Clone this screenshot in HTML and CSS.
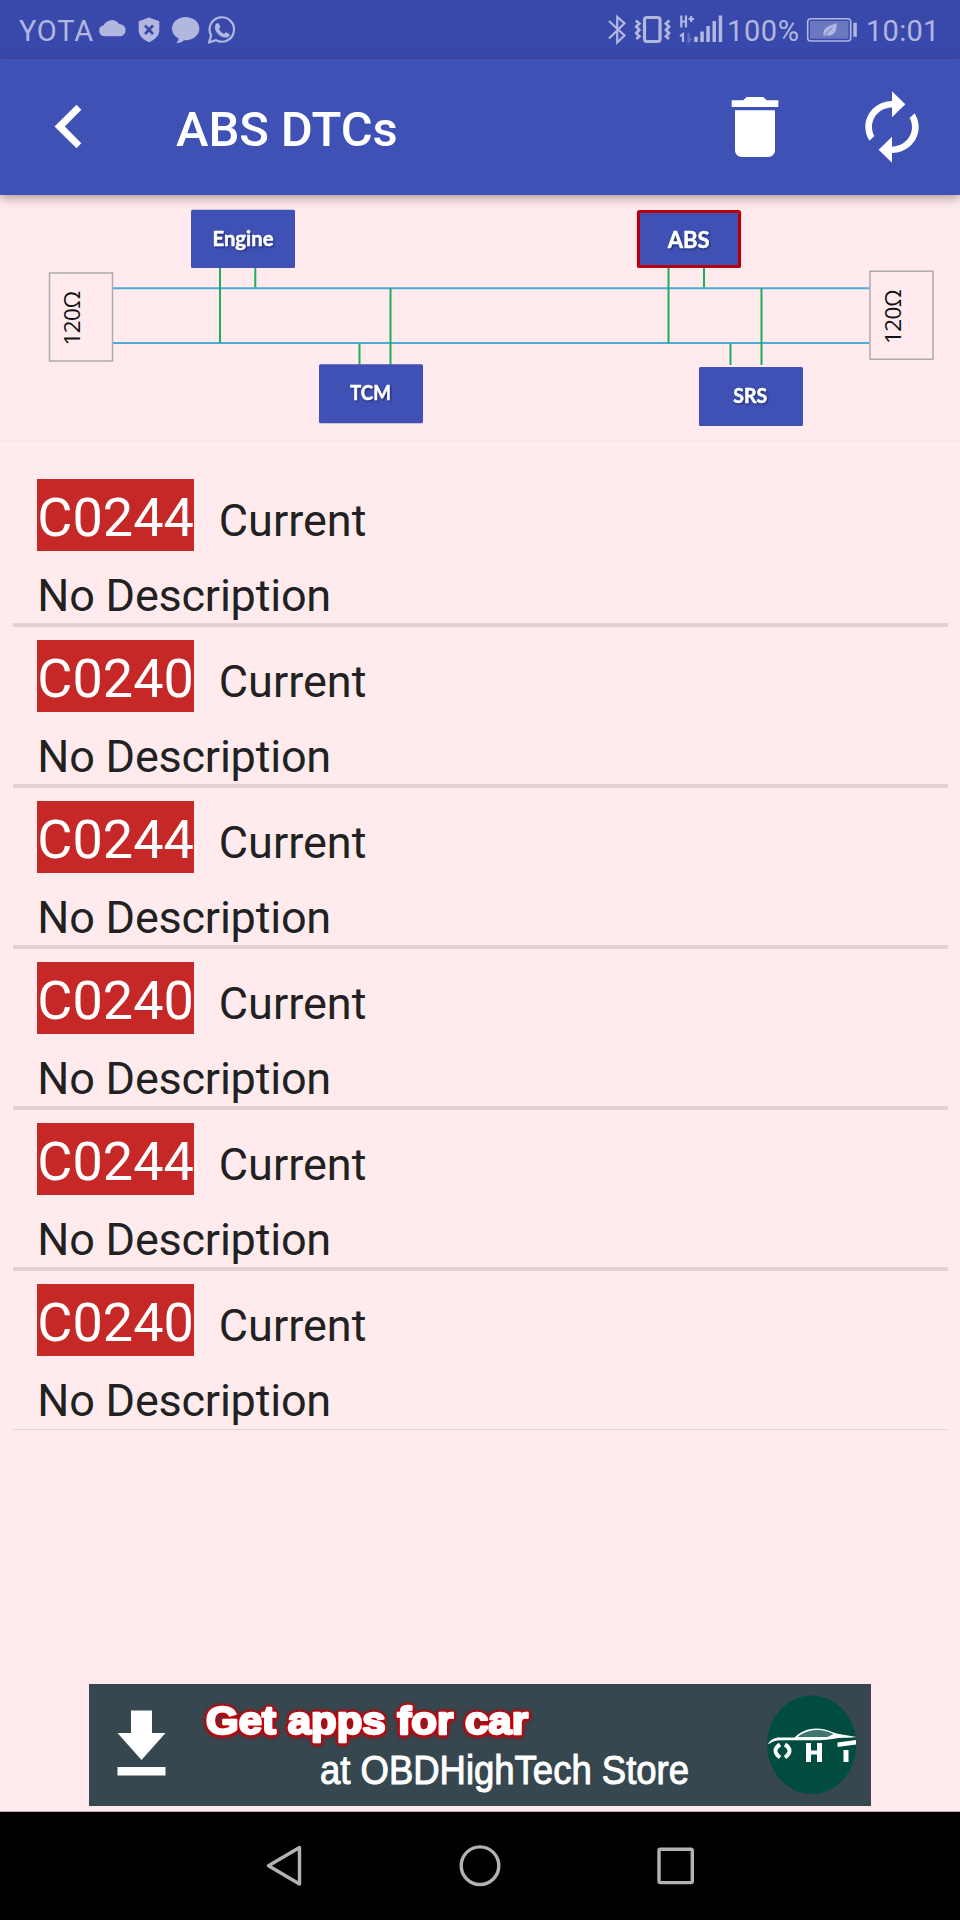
FILE: index.html
```html
<!DOCTYPE html>
<html lang="en">
<head>
<meta charset="utf-8">
<title>ABS DTCs</title>
<link rel="stylesheet" href="styles.css">
</head>
<body>
<div class="screen">
  <div class="status">
    <div class="status-group">
      <span class="carrier">YOTA</span>
      <svg class="status-icons-left" width="140" height="58" viewBox="98 0 140 58">
        <path d="M104.500 36.300a5.600 5.600 0 0 1-.8-11.100 9 9 0 0 1 15.500-1.200 6.200 6.200 0 0 1 1.300 12.300z"/>
        <path d="M149 17.500l10.300 3.700v9.300c0 5-4.300 9.300-10.300 11.700-6-2.400-10.300-6.700-10.300-11.700v-9.300z"/>
        <path class="cutout" d="M145 25.500l8 8.500M153 25.500l-8 8.500"/>
        <path d="M185.700 17c7.600 0 13.700 5 13.700 11.600s-6.100 11.700-13.700 11.700h-1.500c-2 1.800-4.500 2.800-8 2.600 1.500-1.200 2.400-2.600 2.300-4.500-4-2-6.500-5.700-6.500-9.800 0-6.600 6.100-11.600 13.700-11.600z"/>
        <path class="line" d="M209.200 42.300l1.900-7A12.200 12.200 0 1 1 216 40.200z"/>
        <path d="M216.400 23.600c1-1 2.200-.8 2.700.3l1 2.400c.3 1-.3 1.700-1.200 2.700 1.200 2.300 2.900 3.900 5.300 4.900 1-1.200 1.600-1.900 2.400-1.500l2.500 1.300c1 .6.600 2.200-.5 3-3.600 2.300-8.300-.1-11-3.200-2.600-3-3.900-7-1.200-9.900z"/>
      </svg>
    </div>
    <div class="status-group">
      <svg class="status-icons-right" width="122" height="58" viewBox="604 0 122 58">
        <path class="line" d="M609 21l15.500 14.500-7.300 7V17l7.300 6.300L609 38.500"/>
        <rect class="line thick" x="644.500" y="17.500" width="15.500" height="24" rx="2.500"/>
        <path class="line zigzag" d="M635.800 20.500l3.500 3-3 3.200 3 3.200-3 3.200 3 3.200-3 2.700M669.500 20.500l-3.500 3 3 3.200-3 3.200 3 3.200-3 3.200 3 2.700"/>
        <path class="line" d="M681.300 15.500v12M686 15.500v12M681.300 21.500h5M691.200 16v6M688.500 19h5.600M680 36l3-2v8"/>
        <path class="line faint" d="M688.500 33v8.500l3-3"/>
        <path d="M694.200 36.800h3.600v5.200h-3.600zM700.300 31.500h3.500V42h-3.500zM706.300 26h3.500v16h-3.500zM712.500 21h3.500v21h-3.500zM718.700 15.500h3.500V42h-3.500z"/>
      </svg>
      <span class="percent">100%</span>
      <svg class="battery" width="52" height="58" viewBox="806 0 52 58">
        <rect class="line thin" x="807.700" y="18.700" width="43" height="22.300" rx="3"/>
        <rect class="charge" x="810" y="21" width="38.500" height="17.700"/>
        <path d="M853.300 22.800h3.500v14h-3.500z"/>
        <path d="M836.500 23.300c.5 6-1.200 12.300-8 12.300-1 0-1.800-.2-2.300-.5l-2 1.500-1-1c.5-.7.500-1 .2-2 0-6.500 7-8 13.100-10.300z"/>
        <path class="vein" d="M824.500 35l8-7.500"/>
      </svg>
      <span class="clock">10:01</span>
    </div>
  </div>

  <header class="appbar">
    <svg class="back" width="30" height="46" viewBox="53 104 30 46"><path d="M54.500 126.600L76.500 104.700l4.800 5-16.500 16.900 16.500 16.700-4.800 5z"/></svg>
    <h1 class="title">ABS DTCs</h1>
    <svg class="action" width="80" height="80" viewBox="0 0 24 24"><path d="M6 19c0 1.100.9 2 2 2h8c1.100 0 2-.9 2-2V7H6v12zM19 4h-3.500l-1-1h-5l-1 1H5v2h14V4z"/></svg>
    <svg class="action" width="80" height="78" viewBox="0 0 24 24" preserveAspectRatio="none"><path d="M12 6v3l4-4-4-4v3c-4.420 0-8 3.580-8 8 0 1.570.46 3.030 1.240 4.260L6.700 14.800c-.45-.83-.7-1.790-.7-2.800 0-3.310 2.690-6 6-6zm6.760 1.740L17.300 9.200c.44.840.7 1.790.7 2.800 0 3.310-2.690 6-6 6v-3l-4 4 4 4v-3c4.420 0 8-3.580 8-8 0-1.570-.46-3.030-1.240-4.260z"/></svg>
  </header>

  <svg class="diagram" width="960" height="246" viewBox="0 195 960 246">
    <path class="bus" d="M113 288.200H869M113 343H869"/>
    <path class="tap" d="M220 267v76M255.300 267v20.500M359.500 343.500v22M390.500 288v77M668.500 267v76M704 267v20.500M730.500 343.500V365M761.500 288v77"/>
    <rect class="resistor" x="49.500" y="273" width="63" height="88"/>
    <rect class="resistor" x="870" y="271.200" width="63" height="88"/>
    <text class="ohms" transform="translate(79.500 345.500) rotate(-90)" textLength="54.500">120Ω</text>
    <text class="ohms" transform="translate(901 344) rotate(-90)" textLength="54.500">120Ω</text>
    <rect class="unit" x="191" y="209.700" width="104" height="58.300" rx="1.500"/>
    <rect class="unit active" x="638.500" y="211.500" width="101" height="55" rx="1"/>
    <rect class="unit" x="319" y="364.200" width="104" height="59" rx="1.500"/>
    <rect class="unit" x="699" y="367" width="104" height="59" rx="1.500"/>
    <text class="unit-name" x="243" y="245.700" textLength="61" lengthAdjust="spacingAndGlyphs">Engine</text>
    <text class="unit-name big" x="688.700" y="247.500" textLength="42" lengthAdjust="spacingAndGlyphs">ABS</text>
    <text class="unit-name" x="370.500" y="400.300" textLength="41" lengthAdjust="spacingAndGlyphs">TCM</text>
    <text class="unit-name" x="750.300" y="403.300" textLength="34" lengthAdjust="spacingAndGlyphs">SRS</text>
    <path class="edge" d="M0 440.500H960"/>
  </svg>

  <ul class="codes">
    <li class="code-item"><div class="code-head"><span class="code">C0244</span><span class="state">Current</span></div><p class="desc">No Description</p></li>
    <li class="code-item"><div class="code-head"><span class="code">C0240</span><span class="state">Current</span></div><p class="desc">No Description</p></li>
    <li class="code-item"><div class="code-head"><span class="code">C0244</span><span class="state">Current</span></div><p class="desc">No Description</p></li>
    <li class="code-item"><div class="code-head"><span class="code">C0240</span><span class="state">Current</span></div><p class="desc">No Description</p></li>
    <li class="code-item"><div class="code-head"><span class="code">C0244</span><span class="state">Current</span></div><p class="desc">No Description</p></li>
    <li class="code-item"><div class="code-head"><span class="code">C0240</span><span class="state">Current</span></div><p class="desc">No Description</p></li>
  </ul>

  <svg class="banner" width="782" height="122" viewBox="89 1684 782 122">
    <path class="white" d="M131 1710.500h21V1733h13.500l-24 27-24-27H131zM117.500 1767h48v8.500h-48z"/>
    <text class="promo" x="206" y="1733.500" textLength="322" lengthAdjust="spacingAndGlyphs">Get apps for car</text>
    <text class="store" x="320" y="1784" textLength="369" lengthAdjust="spacingAndGlyphs">at OBDHighTech Store</text>
    <ellipse class="logo-disc" cx="811.700" cy="1744.700" rx="44.500" ry="49.300"/>
    <path class="white" d="M767.500 1744.500c3-4.500 6-6.500 11-7h16c5-5 12-9 22-9 8 0 14 3 20 5l20 3.500c-6 .7-12 .7-18 1-8 1.500-16 2.300-26 2.300h-32c-5 0-8 1.500-13 4.200z"/>
    <path class="logo-window" d="M797.500 1737c5-4 12-7 19-7 8 0 12 2 17 4l-6 3z"/>
    <path class="logo-letter" d="M780 1744.500q-9 6 0 13M785 1744.500q9 6 0 13"/>
    <path class="white" d="M806 1743h5v7.500h6v-7.500h5v19h-5v-7.500h-6v7.500h-5zM837.500 1742.500l18.500-2.500v4.500l-18.500 2.500zM843.500 1750h5v12h-5z"/>
  </svg>

  <nav class="navbar">
    <svg class="nav-icon" width="40" height="44" viewBox="265 1844 40 44"><path d="M268.500 1865.700L299.500 1847.500V1884z"/></svg>
    <svg class="nav-icon home" width="44" height="44" viewBox="458 1844 44 44"><circle cx="480" cy="1865.700" r="18.800"/></svg>
    <svg class="nav-icon" width="40" height="44" viewBox="656 1844 40 44"><rect x="659" y="1849.300" width="33.300" height="33.300" rx="1.500"/></svg>
  </nav>
</div>
</body>
</html>
```
FILE: styles.css
```css
* { box-sizing: border-box; }
body { margin: 0; background: #ffebee; font-family: Roboto, "Liberation Sans", sans-serif; }
svg { display: block; flex: none; }

.screen { width: 960px; height: 1920px; display: flex; flex-direction: column; background: #ffebee; overflow: hidden; }

.status { height: 59px; flex: none; display: flex; justify-content: space-between; padding: 0 23px 1px 19px; background: #3949ab; color: #b1b7df; font-size: 29px; line-height: 62px; }
.status-group { display: flex; white-space: nowrap; }
.status svg { fill: #b1b7df; }
.carrier { width: 79px; letter-spacing: 0.8px; }
.percent { width: 78px; padding-left: 1px; letter-spacing: 0.600px; }
.battery { margin-left: 2px; }
.clock { width: 79px; padding-left: 8px; letter-spacing: 0.3px; }
.status .line { fill: none; stroke: #b1b7df; stroke-width: 2.200; }
.status .thick { stroke-width: 3.200; }
.status .thin { stroke-width: 1.600; }
.status .zigzag { stroke-width: 2.800; }
.status .faint { opacity: 0.35; }
.status .cutout { stroke: #3949ab; stroke-width: 2.600; }
.status .charge { fill: #6b77c0; }
.status .vein { stroke: #6b77c0; stroke-width: 1; }

.appbar { height: 136px; flex: none; display: flex; align-items: center; padding-left: 53px; padding-right: 28px; background: #3f51b5; box-shadow: 0 3px 10px rgba(60, 30, 40, 0.42); position: relative; z-index: 1; }
.appbar svg { fill: #fff; }
.title { margin: 6px 0 0 93px; flex: 1; color: #fff; font-size: 49px; font-weight: 500; line-height: 60px; letter-spacing: -0.1px; white-space: nowrap; }
.action + .action { margin-left: 57px; }

.bus { stroke: #4bacd6; stroke-width: 2; }
.tap { stroke: #1fac5c; stroke-width: 2; }
.resistor { fill: none; stroke: #ababab; stroke-width: 1.500; }
.ohms { font-family: "Open Sans", sans-serif; font-size: 22.500px; fill: #111; font-weight: 400; }
.unit { fill: #3f51b5; }
.active { stroke: #b7000c; stroke-width: 3.200; }
.unit-name { font-family: Lato, sans-serif; font-weight: 700; font-size: 20px; fill: #fff; stroke: #fff; stroke-width: 0.500; text-anchor: middle; filter: drop-shadow(1px 1.500px 1px rgba(10, 15, 60, 0.6)); }
.big { font-size: 22.500px; }
.edge { stroke: #f3e6f0; stroke-width: 1; }

.codes { list-style: none; margin: 0; padding: 24.800px 12.500px 0; flex: 1; color: #212121; }
.code-item { height: 161px; padding: 12.800px 24px 0 24.800px; border-bottom: 4px solid #e2d0d3; }
.code-item:last-child { height: 159px; border-bottom: 1px solid #e6d5d8; }
.code-head { display: flex; align-items: baseline; }
.code { width: 156.500px; height: 72.500px; background: #c62828; color: #fff; font-size: 54px; line-height: 78px; white-space: nowrap; }
.state { margin-left: 25px; font-size: 45px; line-height: 60px; }
.desc { margin: 16.500px 0 0; font-size: 45px; line-height: 56px; letter-spacing: -0.22px; white-space: nowrap; }

.banner { align-self: center; margin-bottom: 5px; background: #37474f; }
.white { fill: #fff; }
.promo { font-family: "Liberation Sans", Arial, sans-serif; font-weight: 700; font-size: 39px; fill: #fff; stroke: #fff; stroke-width: 2.400; stroke-linejoin: round; filter: drop-shadow(0 0 1.200px #c8000a) drop-shadow(0 0 1px #c8000a) drop-shadow(0 0 1px #c8000a) drop-shadow(0 1px 1px #a00d14); }
.store { font-family: "Liberation Sans", Arial, sans-serif; font-size: 40px; fill: #fff; stroke: #fff; stroke-width: 1; }
.logo-disc { fill: #004d40; }
.logo-window { fill: #3d766c; }
.logo-letter { fill: none; stroke: #fff; stroke-width: 4; }

.navbar { height: 109px; flex: none; display: flex; align-items: flex-start; justify-content: space-between; padding: 32px 264px 0 265px; background: #000; border-top: 1px solid #b9abad; }
.nav-icon { fill: none; stroke: #b3b3b3; stroke-width: 3.400; stroke-linejoin: round; }
.home { margin-right: 1px; }
```
